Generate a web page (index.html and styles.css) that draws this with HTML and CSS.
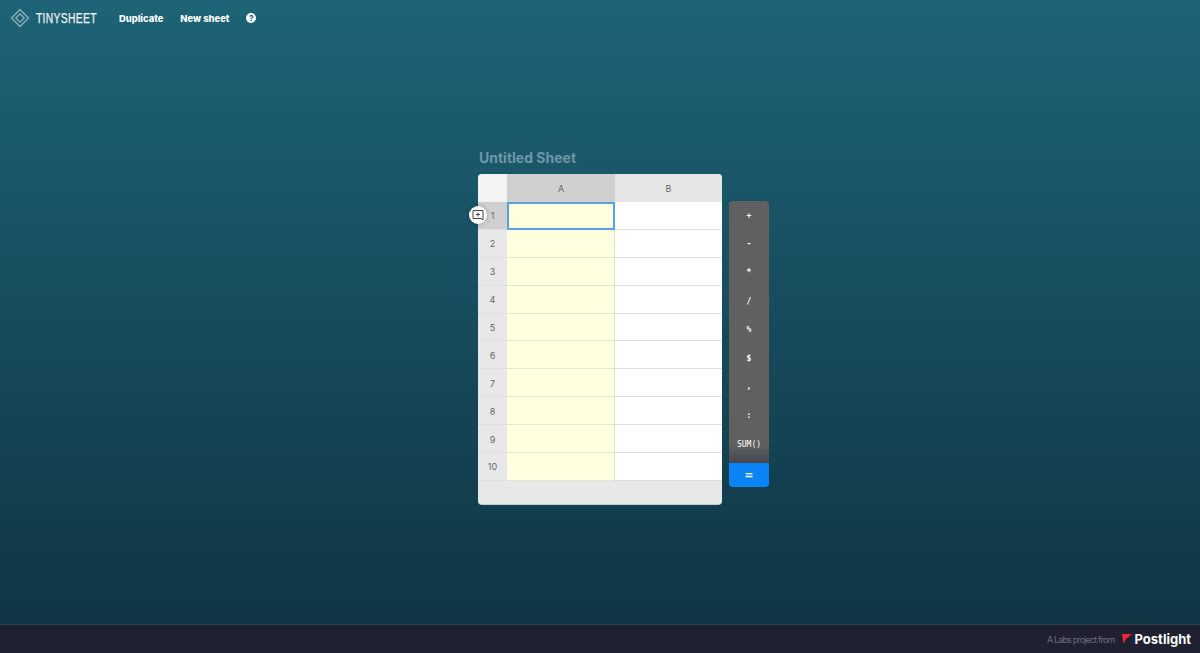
FILE: index.html
```html
<!DOCTYPE html>
<html lang="en">
<head>
    <meta charset="UTF-8">
    <title>Tinysheet</title>
    <link rel="stylesheet" href="styles.css">
</head>
<body>
    <header class="topbar">
        <a class="brand">
            <svg class="brand-icon" width="20" height="20" viewBox="0 0 20 20" fill="none" stroke="#8fb0bc" stroke-width="1.3">
                <path d="M10 1.5 18.5 10 10 18.5 1.5 10Z"/>
                <path d="M10 5.8 14.2 10 10 14.2 5.8 10Z"/>
            </svg>
            <span class="brand-name">TINYSHEET</span>
        </a>
        <a class="nav-link">Duplicate</a>
        <a class="nav-link">New sheet</a>
        <span class="help">?</span>
    </header>

    <main class="workspace">
        <div class="sheet-area">
            <h1 class="sheet-title">Untitled Sheet</h1>
            <div class="sheet">
                <div class="row head-row">
                    <div class="cell corner"></div>
                    <div class="cell col-head active">A</div>
                    <div class="cell col-head">B</div>
                </div>
                <div class="row">
                    <div class="cell row-head active">1</div>
                    <div class="cell col-a selected"></div>
                    <div class="cell col-b"></div>
                </div>
                <div class="row"><div class="cell row-head">2</div><div class="cell col-a"></div><div class="cell col-b"></div></div>
                <div class="row"><div class="cell row-head">3</div><div class="cell col-a"></div><div class="cell col-b"></div></div>
                <div class="row"><div class="cell row-head">4</div><div class="cell col-a"></div><div class="cell col-b"></div></div>
                <div class="row"><div class="cell row-head">5</div><div class="cell col-a"></div><div class="cell col-b"></div></div>
                <div class="row"><div class="cell row-head">6</div><div class="cell col-a"></div><div class="cell col-b"></div></div>
                <div class="row"><div class="cell row-head">7</div><div class="cell col-a"></div><div class="cell col-b"></div></div>
                <div class="row"><div class="cell row-head">8</div><div class="cell col-a"></div><div class="cell col-b"></div></div>
                <div class="row"><div class="cell row-head">9</div><div class="cell col-a"></div><div class="cell col-b"></div></div>
                <div class="row"><div class="cell row-head">10</div><div class="cell col-a"></div><div class="cell col-b"></div></div>
                <div class="sheet-foot"></div>
                <button class="comment-btn">
                    <svg width="12" height="12" viewBox="0 0 12 12" fill="none" stroke="#444" stroke-width="1">
                        <path d="M1 1.5H11V11L9 9.5H1Z"/>
                        <path d="M6 3.5V7.5M4 5.5H8"/>
                    </svg>
                </button>
            </div>
        </div>
        <div class="keypad">
            <div class="keys">
                <button class="key">+</button>
                <button class="key">-</button>
                <button class="key">*</button>
                <button class="key">/</button>
                <button class="key">%</button>
                <button class="key">$</button>
                <button class="key">,</button>
                <button class="key">:</button>
                <button class="key sum">SUM()</button>
            </div>
            <button class="key equals">=</button>
        </div>
    </main>

    <footer class="credit">
        <span class="credit-text">A Labs project from</span>
        <svg class="credit-mark" width="10" height="10" viewBox="0 0 10 10"><path d="M0 0H10L3.8 5.2 1.4 10Z" fill="#ee2436"/></svg>
        <span class="credit-name">Postlight</span>
    </footer>
</body>
</html>
```

FILE: styles.css
```css
* {
    box-sizing: border-box;
}
html, body {
    height: 100%;
}
body {
    margin: 0;
    display: flex;
    flex-direction: column;
    font-family: 'Inter', sans-serif;
    background: linear-gradient(#1e6377, #0f3341);
    overflow: hidden;
}
.topbar {
    height: 36px;
    padding-left: 10px;
    display: flex;
    align-items: center;
    color: white;
}
.brand {
    display: flex;
    align-items: center;
    margin-right: 22px;
}
.brand-icon {
    margin-right: 6px;
}
.brand-name {
    width: 61px;
    white-space: nowrap;
    font-family: 'Liberation Sans', sans-serif;
    font-size: 14px;
    letter-spacing: 0.4px;
    color: #eef4f6;
    -webkit-text-stroke: 0.25px #eef4f6;
    transform: scaleX(0.74);
    transform-origin: left center;
}
.nav-link {
    font-size: 9.4px;
    font-weight: 800;
    margin-right: 17px;
}
.help {
    width: 10px;
    height: 10px;
    border-radius: 50%;
    background-color: white;
    color: #1e6377;
    font-size: 8px;
    font-weight: 800;
    line-height: 10px;
    text-align: center;
}
.workspace {
    flex: 1;
    display: grid;
    grid-template-columns: 1fr 244px 1fr;
    align-items: start;
    padding-top: 112px;
}
.sheet-area {
    grid-column: 2;
}
.sheet-title {
    margin: 0 0 7px 1px;
    font-size: 14px;
    line-height: 19px;
    font-weight: 700;
    color: #6d98a6;
}
.sheet {
    position: relative;
    width: 244px;
    border-radius: 4px;
    background-color: #e8e8e8;
    box-shadow: 0 1px 0 #b9cdd3;
    font-size: 9px;
    color: #666;
}
.row {
    display: grid;
    grid-template-columns: 29px 108px 107px;
    height: 27.9px;
}
.head-row {
    height: 28px;
}
.cell {
    display: flex;
    align-items: center;
    justify-content: center;
    padding-top: 1px;
}
.corner {
    background-color: #f3f3f3;
    border-top-left-radius: 4px;
}
.col-head {
    background-color: #e6e6e6;
}
.col-head:last-child {
    border-top-right-radius: 4px;
}
.col-head.active, .row-head.active {
    background-color: #d0d0d0;
}
.row-head {
    background-color: #e8e8e8;
    border-bottom: 1px solid #e0e0e0;
}
.col-a {
    background-color: #ffffe0;
    border-right: 1px solid #dedec8;
    border-bottom: 1px solid #e6e6d0;
}
.col-b {
    background-color: white;
    border-bottom: 1px solid #dedede;
}
.selected {
    border: 2px solid #5ba2dc;
}
.sheet-foot {
    height: 23.5px;
    border-radius: 0 0 4px 4px;
}
.comment-btn {
    position: absolute;
    left: -9px;
    top: 32px;
    width: 18px;
    height: 18px;
    padding: 0;
    border: none;
    border-radius: 50%;
    background-color: white;
    box-shadow: 0 0 4px rgba(0, 0, 0, 0.25);
    display: flex;
    align-items: center;
    justify-content: center;
}
.keypad {
    margin: 53px 0 0 7px;
    width: 40px;
    border-radius: 4px;
    overflow: hidden;
}
.keys {
    padding-bottom: 4.6px;
    background: linear-gradient(#606060 93%, #44484c);
}
.key {
    display: block;
    width: 100%;
    height: 28.6px;
    border: none;
    padding: 0;
    background: none;
    color: white;
    font-family: 'DejaVu Sans Mono', monospace;
    font-size: 8px;
    font-weight: 700;
}
.sum {
    font-weight: 400;
}
.equals {
    height: 24px;
    background-color: #0a84f5;
    font-size: 13px;
}
.credit {
    height: 29px;
    padding-right: 9px;
    display: flex;
    align-items: center;
    justify-content: flex-end;
    background-color: #1f2130;
    border-top: 1px solid #2d3f4b;
}
.credit-text {
    font-size: 9px;
    letter-spacing: -0.85px;
    color: #6c6e78;
    margin-right: 7px;
}
.credit-mark {
    margin-right: 3px;
}
.credit-name {
    font-size: 13px;
    font-weight: 700;
    color: white;
}
```
